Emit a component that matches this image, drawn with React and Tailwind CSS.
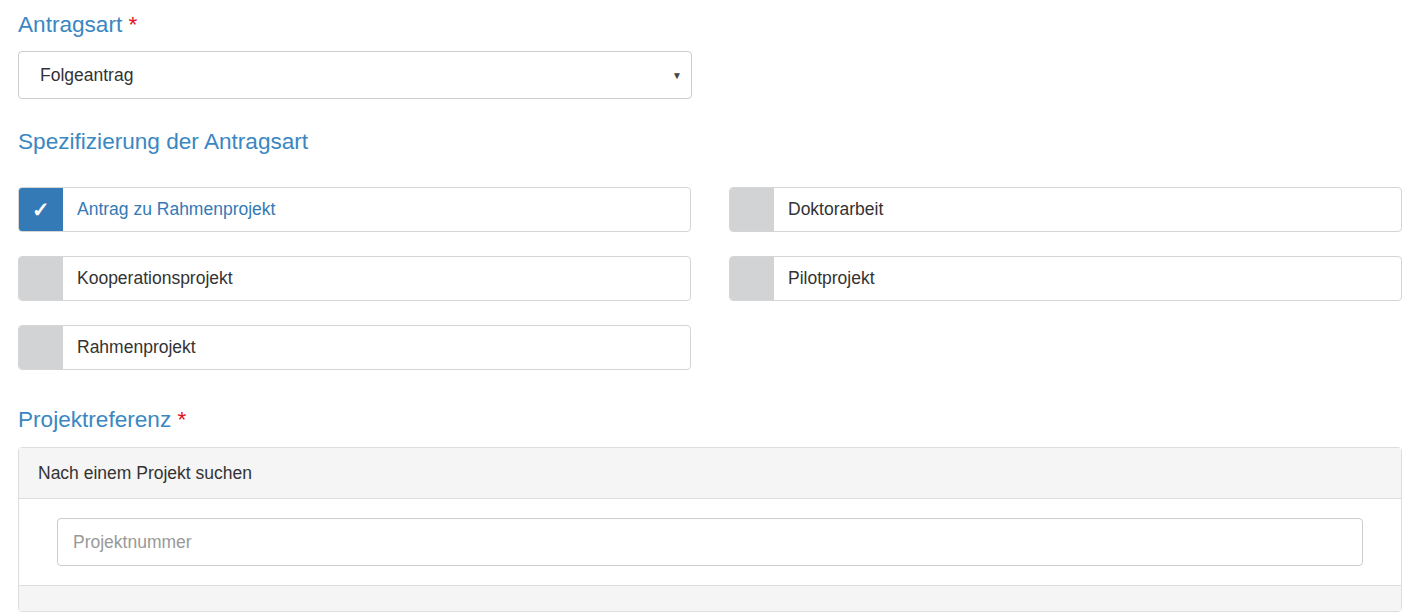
import { useState } from 'react';

const options = [
  ['Antrag zu Rahmenprojekt', 'Doktorarbeit'],
  ['Kooperationsprojekt', 'Pilotprojekt'],
  ['Rahmenprojekt', null],
];

function Check({ label, checked, onToggle }) {
  return (
    <button
      type="button"
      onClick={onToggle}
      className="flex h-[45px] items-stretch rounded border border-[#d5d5d5] bg-white text-left"
    >
      <span
        className={
          'flex w-[44px] shrink-0 items-center justify-center rounded-l-[3px] text-[21px] font-bold text-white ' +
          (checked ? 'bg-[#337ab7]' : 'bg-[#d2d3d5]')
        }
      >
        {checked ? '✓' : ''}
      </span>
      <span className={'flex items-center pl-[14px] text-[17.5px] ' + (checked ? 'text-[#337ab7]' : 'text-[#333]')}>
        {label}
      </span>
    </button>
  );
}

export default function App() {
  const [selected, setSelected] = useState({ 'Antrag zu Rahmenprojekt': true });
  const toggle = (k) => setSelected((s) => ({ ...s, [k]: !s[k] }));

  return (
    <div className="min-h-screen bg-white pl-[18px] pr-[4px] pt-[10px] font-['Liberation_Sans',Arial,sans-serif] text-[#333]">
      <h2 className="text-[22.6px] leading-[30px] text-[#3a87c2]">
        Antragsart <span className="text-[#e3111b]">*</span>
      </h2>
      <div className="mt-[11px] w-[674px]">
        <div className="flex h-[48px] items-center justify-between rounded border border-[#ccc] bg-white pl-[21px] pr-[9px] text-[17.5px]">
          <span>Folgeantrag</span>
          <span className="text-[10px] text-[#444]">▼</span>
        </div>
      </div>

      <h2 className="mt-[28px] text-[22.6px] leading-[30px] text-[#3a87c2]">Spezifizierung der Antragsart</h2>
      <div className="mt-[30px] grid grid-cols-2 gap-x-[38px] gap-y-[24px]">
        {options.flat().map((o, i) =>
          o ? (
            <Check key={o} label={o} checked={!!selected[o]} onToggle={() => toggle(o)} />
          ) : (
            <div key={i} />
          ),
        )}
      </div>

      <h2 className="mt-[35px] text-[22.6px] leading-[30px] text-[#3a87c2]">
        Projektreferenz <span className="text-[#e3111b]">*</span>
      </h2>
      <div className="mt-[12px] rounded border border-[#ddd]">
        <div className="flex h-[51px] items-center border-b border-[#ddd] bg-[#f5f5f5] px-[19px] text-[17.5px]">
          Nach einem Projekt suchen
        </div>
        <div className="bg-white px-[38px] py-[19px]">
          <input
            placeholder="Projektnummer"
            className="h-[48px] w-full rounded border border-[#ccc] px-[15px] text-[17.5px] outline-none placeholder:text-[#999]"
          />
        </div>
        <div className="h-[26px] border-t border-[#ddd] bg-[#f5f5f5]" />
      </div>
    </div>
  );
}
